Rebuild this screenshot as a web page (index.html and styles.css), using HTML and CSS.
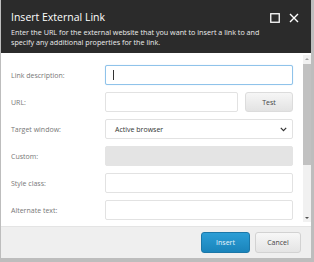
FILE: index.html
```html
<!DOCTYPE html>
<html>
<head>
<meta charset="utf-8">
<link rel="stylesheet" href="styles.css">
</head>
<body>
<div class="dialog">
  <div class="header">
    <div class="title-row">
      <div class="title">Insert External Link</div>
      <div class="controls">
        <svg class="icon" width="10" height="10" viewBox="0 0 10 10"><rect x="0.75" y="0.75" width="8.5" height="8.5" fill="none" stroke="#fff" stroke-width="1.3"/></svg>
        <svg class="icon" width="10" height="10" viewBox="0 0 10 10"><path d="M1 1L9 9M9 1L1 9" stroke="#fff" stroke-width="1.4" fill="none"/></svg>
      </div>
    </div>
    <div class="desc">Enter the URL for the external website that you want to insert a link to and specify any additional properties for the link.</div>
  </div>
  <div class="main">
    <div class="form">
      <div class="row"><label class="label">Link description:</label><div class="input focus"><span class="caret"></span></div></div>
      <div class="row"><label class="label">URL:</label><div class="input short"></div><div class="btn-test">Test</div></div>
      <div class="row"><label class="label">Target window:</label><div class="input select"><span>Active browser</span><svg width="7" height="5" viewBox="0 0 7 5"><path d="M0.8 0.8L3.5 3.6L6.2 0.8" stroke="#333" stroke-width="1.2" fill="none"/></svg></div></div>
      <div class="row"><label class="label">Custom:</label><div class="input disabled"></div></div>
      <div class="row"><label class="label">Style class:</label><div class="input"></div></div>
      <div class="row"><label class="label">Alternate text:</label><div class="input"></div></div>
    </div>
    <div class="scrollbar">
      <div class="arrow up"></div>
      <div class="track"><div class="thumb"></div></div>
      <div class="arrow down"></div>
    </div>
  </div>
  <div class="footer">
    <div class="btn primary">Insert</div>
    <div class="btn">Cancel</div>
  </div>
</div>
</body>
</html>
```
FILE: styles.css
```css
html, body { margin: 0; padding: 0; }
body {
  width: 314px;
  height: 262px;
  background: #bdbdbd;
  font-family: "Open Sans", "Noto Sans", sans-serif;
  overflow: hidden;
}
.dialog {
  margin-left: 1px;
  width: 310px;
  height: 258px;
  display: flex;
  flex-direction: column;
  background: #fff;
}
.header {
  background: #2b2b2b;
  height: 53px;
  box-sizing: border-box;
  padding: 10px 12px 0 10px;
  color: #fff;
}
.title-row {
  display: flex;
  align-items: center;
  justify-content: space-between;
}
.title {
  font-size: 10.5px;
  line-height: 14px;
  color: #fff;
}
.controls {
  display: flex;
  gap: 9px;
  align-items: center;
  margin-top: 1px;
}
.icon { display: block; }
.desc {
  margin-top: 3px;
  font-size: 7.2px;
  line-height: 10px;
  color: #ececec;
  width: 262px;
}
.main {
  height: 173px;
  display: flex;
}
.form {
  flex: 1;
  padding: 12px 10px 0 10px;
  display: flex;
  flex-direction: column;
  gap: 7px;
}
.row {
  display: flex;
  align-items: center;
  height: 20px;
  gap: 7px;
}
.label {
  width: 87px;
  flex: none;
  font-size: 7px;
  color: #777;
}
.input {
  flex: 1;
  height: 20px;
  box-sizing: border-box;
  border: 1px solid #e2e2e2;
  border-radius: 2px;
  background: #fff;
  display: flex;
  align-items: center;
}
.input.focus {
  border-color: #8fc3ea;
  box-shadow: 0 0 1px #b5d8f3;
}
.caret {
  display: block;
  width: 1px;
  height: 10px;
  margin-left: 7px;
  background: #333;
}
.input.select {
  justify-content: space-between;
  padding: 0 5px 0 9px;
  font-size: 7px;
  color: #333;
}
.input.disabled {
  background: #e4e4e4;
  border-color: #e4e4e4;
}
.btn-test {
  width: 48px;
  height: 20px;
  box-sizing: border-box;
  border: 1px solid #dcdcdc;
  border-radius: 3px;
  background: linear-gradient(#f6f6f6, #e3e3e3);
  font-size: 7px;
  color: #444;
  display: flex;
  align-items: center;
  justify-content: center;
}
.scrollbar {
  width: 8px;
  margin: 2px 0 4px 0;
  display: flex;
  flex-direction: column;
  background: #f1f1f1;
}
.arrow {
  height: 8px;
  position: relative;
}
.arrow::after {
  content: "";
  position: absolute;
  left: 2px;
  width: 0;
  height: 0;
  border-left: 2px solid transparent;
  border-right: 2px solid transparent;
}
.arrow.up::after { top: 3px; border-bottom: 2px solid #a0a0a0; }
.arrow.down::after { top: 3px; border-top: 2px solid #505050; }
.track {
  flex: 1;
  display: flex;
  flex-direction: column;
}
.thumb {
  height: 101px;
  margin-top: 1px;
  background: #c1c1c1;
}
.footer {
  height: 32px;
  box-sizing: border-box;
  background: #efefef;
  border-top: 1px solid #e4e4e4;
  display: flex;
  align-items: center;
  justify-content: flex-end;
  gap: 5px;
  padding: 0 10px 0 0;
}
.btn {
  width: 46px;
  height: 21px;
  box-sizing: border-box;
  border: 1px solid #d2d2d2;
  border-radius: 3px;
  background: linear-gradient(#f7f7f7, #e4e4e4);
  font-size: 7px;
  color: #444;
  display: flex;
  align-items: center;
  justify-content: center;
}
.btn.primary {
  width: 49px;
  border-color: #1b77a8;
  background: linear-gradient(#2c9ed6, #1a84bb);
  color: #e8f4fb;
}
```
